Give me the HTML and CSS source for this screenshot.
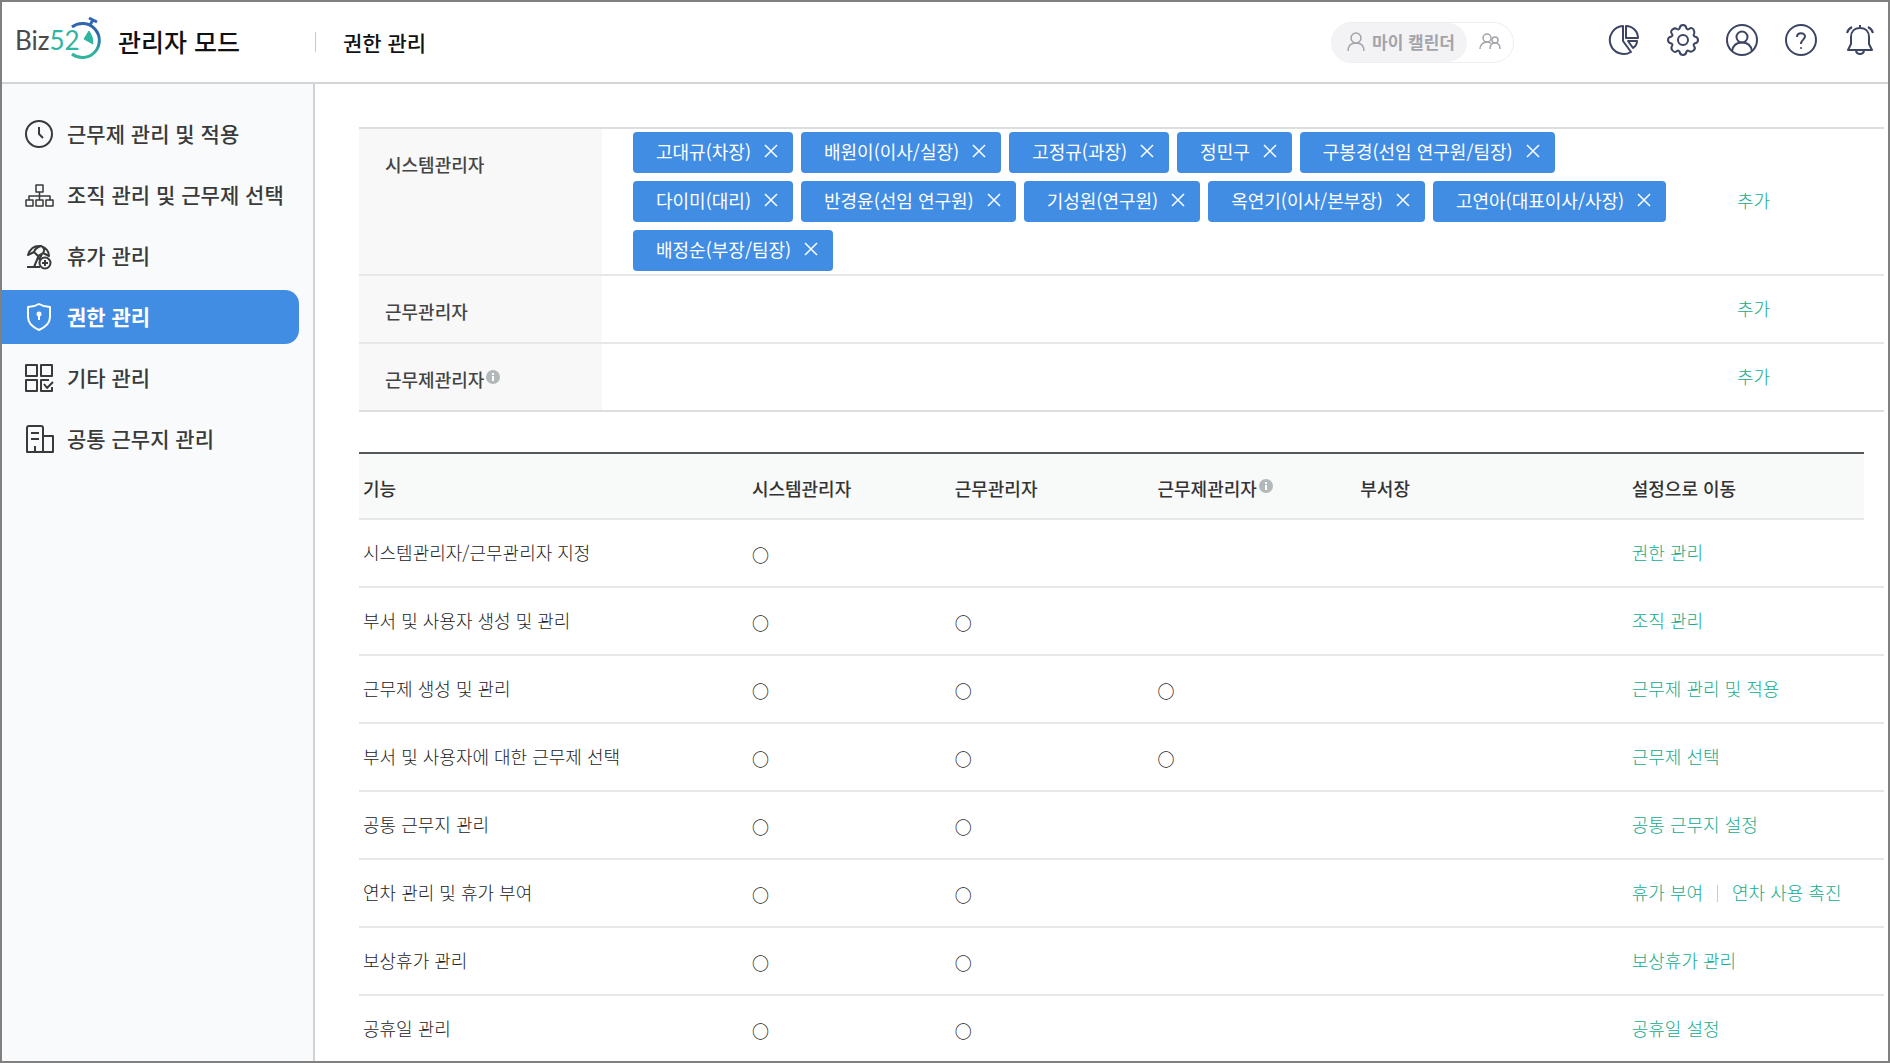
FILE: index.html
```html
<!DOCTYPE html>
<html lang="ko">
<head>
    <meta charset="UTF-8">
    <meta name="viewport" content="width=device-width, initial-scale=1.0">
    <title>권한 관리 - 관리자 모드</title>
    <link rel="stylesheet" href="styles.css">
</head>
<body>
    <div class="app">
        <header class="header">
            <div class="brand">
                <a href="#" class="logo" aria-label="Biz52">
                    <svg width="88" height="46" viewBox="0 0 88 46">
                        <defs>
                            <linearGradient id="ring" x1="0" y1="0" x2="0" y2="1">
                                <stop offset="0.3" stop-color="#2f66ad"/>
                                <stop offset="0.9" stop-color="#2fb5a0"/>
                            </linearGradient>
                        </defs>
                        <text x="-1" y="34" class="logo-text">Biz<tspan class="logo-num">52</tspan></text>
                        <path d="M56 11A17 17 0 1 1 56 38" fill="none" stroke="url(#ring)" stroke-width="3"/>
                        <path d="M73 2l8 4M77 4l-3 5" fill="none" stroke="#2f66ad" stroke-width="3"/>
                        <path d="M73 15q4 5 4 13l-9-5z" fill="#2fb5a0" stroke="#2fb5a0" stroke-width="1" stroke-linejoin="round"/>
                    </svg>
                </a>
                <strong class="mode">관리자 모드</strong>
            </div>
            <h1 class="page-title">권한 관리</h1>

            <div class="calendar-switch">
                <button type="button" class="switch-btn on">
                    <svg width="18" height="20" viewBox="0 0 18 20"><circle cx="9" cy="6" r="5"/><path d="M1 19c0-5 3-8 8-8s8 3 8 8"/></svg>
                    마이 캘린더
                </button>
                <button type="button" class="switch-btn" aria-label="공유 캘린더">
                    <svg width="22" height="18" viewBox="0 0 22 18"><circle cx="8" cy="5" r="4"/><path d="M1 16c0-4 3-7 7-7 2 0 3 .5 4 1.500"/><circle cx="16" cy="7" r="3"/><path d="M11 16c0-4 2-6 5-6s5 2 5 6"/></svg>
                </button>
            </div>

            <nav class="tools" aria-label="도구">
                <button type="button" aria-label="통계">
                    <svg width="32" height="32" viewBox="0 0 32 32"><path d="M15 2A14 14 0 1 0 23 28L15 17z"/><path d="M18 2a12 12 0 0 1 12 12H18z"/><path d="M20 17h9c0 3-1 5-4 7z"/></svg>
                </button>
                <button type="button" aria-label="설정">
                    <svg width="32" height="32" viewBox="0 0 32 32"><path d="M12.500 4.500Q13 1 16 1T19.500 4.500Q20.500 6 22 5Q25 3 26.500 5.500T27 10Q26 11.500 27.500 12.500Q31 13 31 16T27.500 19.500Q26 20.500 27 22Q29 24.500 26.500 26.500T22 27Q20.500 26 19.500 27.500Q19 31 16 31T12.500 27.500Q11.500 26 10 27Q7.500 29 5.500 26.500T5 22Q6 20.500 4.500 19.500Q1 19 1 16T4.500 12.500Q6 11.500 5 10Q3 7.500 5.500 5.500T10 5Q11.500 6 12.500 4.500z"/><circle cx="16" cy="16" r="5"/></svg>
                </button>
                <button type="button" aria-label="내 정보">
                    <svg width="32" height="32" viewBox="0 0 32 32"><circle cx="16" cy="16" r="15"/><circle cx="16" cy="13" r="5.500"/><path d="M6 27c1-5.500 5-8.500 10-8.500s9 3 10 8.500"/></svg>
                </button>
                <button type="button" aria-label="도움말">
                    <svg width="32" height="32" viewBox="0 0 32 32"><circle cx="16" cy="16" r="15"/><path d="M12 13c0-5 8-5 8-.5 0 3-4 3.500-4 7.500"/><circle cx="16" cy="24" r="1" class="dot"/></svg>
                </button>
                <button type="button" aria-label="알림">
                    <svg width="32" height="32" viewBox="0 0 32 32"><path d="M16 1v3M16 4c-6 0-9 4-9 9v7l-3 6h24l-3-6v-7c0-5-3-9-9-9zM12 27c1 4 7 4 8 0M3 9q1-4 5-6M29 9q-1-4-5-6"/></svg>
                </button>
            </nav>
        </header>

        <div class="body">
            <nav class="sidebar" aria-label="관리 메뉴">
                <a href="#" class="menu-item">
                    <svg width="30" height="30" viewBox="0 0 30 30"><circle cx="15" cy="15" r="13"/><path d="M15 8v7l4 4"/></svg>
                    <span>근무제 관리 및 적용</span>
                </a>
                <a href="#" class="menu-item">
                    <svg width="30" height="30" viewBox="0 0 30 30" class="thin"><path d="M12 5h7v7h-7zM2 20h7v6H2zM12 20h7v6h-7zM22 20h7v6h-7zM15.500 12v8M5 20v-4h21v4"/></svg>
                    <span>조직 관리 및 근무제 선택</span>
                </a>
                <a href="#" class="menu-item">
                    <svg width="30" height="30" viewBox="0 0 30 30"><path d="M4 14Q7 4 17 5Q25 8 25 15L19 12L14 15L10 11zM17 5Q11 7 10 11M17 5Q22 8 19 12M15 14l-5 12M18 13l-3 6M3 26h13"/><circle cx="21" cy="22" r="5.500"/><path d="M21 19v6M18 22h6"/></svg>
                    <span>휴가 관리</span>
                </a>
                <a href="#" class="menu-item active" aria-current="page">
                    <svg width="30" height="30" viewBox="0 0 30 30"><path d="M15 2q5 3 11 3v10q0 8-11 13Q4 23 4 15V5q6 0 11-3z"/><path d="M15 12v6"/><circle cx="15" cy="12" r="1.500"/></svg>
                    <span>권한 관리</span>
                </a>
                <a href="#" class="menu-item">
                    <svg width="30" height="30" viewBox="0 0 30 30"><path d="M2 2h11v11H2zM17 2h11v11H17zM2 17h11v11H2zM25 17h-8v11h11v-4M20 21l3 4 6-6"/></svg>
                    <span>기타 관리</span>
                </a>
                <a href="#" class="menu-item">
                    <svg width="30" height="30" viewBox="0 0 30 30"><path d="M3 28V4q0-2 2-2h12q2 0 2 2v24zM19 12h10v16H19M7 9h8M7 15h8M11 28v-6"/></svg>
                    <span>공통 근무지 관리</span>
                </a>
            </nav>

            <main class="content">
                <table class="managers">
                    <tbody>
                        <tr>
                            <th scope="row">시스템관리자</th>
                            <td>
                                <ul class="chips">
                                    <li class="chip">고대규(차장)<button type="button" aria-label="고대규 삭제"><svg width="14" height="14" viewBox="0 0 14 14"><path d="M1 1l12 12M13 1L1 13"/></svg></button></li>
                                    <li class="chip">배원이(이사/실장)<button type="button" aria-label="배원이 삭제"><svg width="14" height="14" viewBox="0 0 14 14"><path d="M1 1l12 12M13 1L1 13"/></svg></button></li>
                                    <li class="chip">고정규(과장)<button type="button" aria-label="고정규 삭제"><svg width="14" height="14" viewBox="0 0 14 14"><path d="M1 1l12 12M13 1L1 13"/></svg></button></li>
                                    <li class="chip">정민구<button type="button" aria-label="정민구 삭제"><svg width="14" height="14" viewBox="0 0 14 14"><path d="M1 1l12 12M13 1L1 13"/></svg></button></li>
                                    <li class="chip">구봉경(선임 연구원/팀장)<button type="button" aria-label="구봉경 삭제"><svg width="14" height="14" viewBox="0 0 14 14"><path d="M1 1l12 12M13 1L1 13"/></svg></button></li>
                                    <li class="chip">다이미(대리)<button type="button" aria-label="다이미 삭제"><svg width="14" height="14" viewBox="0 0 14 14"><path d="M1 1l12 12M13 1L1 13"/></svg></button></li>
                                    <li class="chip">반경윤(선임 연구원)<button type="button" aria-label="반경윤 삭제"><svg width="14" height="14" viewBox="0 0 14 14"><path d="M1 1l12 12M13 1L1 13"/></svg></button></li>
                                    <li class="chip">기성원(연구원)<button type="button" aria-label="기성원 삭제"><svg width="14" height="14" viewBox="0 0 14 14"><path d="M1 1l12 12M13 1L1 13"/></svg></button></li>
                                    <li class="chip">옥연기(이사/본부장)<button type="button" aria-label="옥연기 삭제"><svg width="14" height="14" viewBox="0 0 14 14"><path d="M1 1l12 12M13 1L1 13"/></svg></button></li>
                                    <li class="chip">고연아(대표이사/사장)<button type="button" aria-label="고연아 삭제"><svg width="14" height="14" viewBox="0 0 14 14"><path d="M1 1l12 12M13 1L1 13"/></svg></button></li>
                                    <li class="chip">배정순(부장/팀장)<button type="button" aria-label="배정순 삭제"><svg width="14" height="14" viewBox="0 0 14 14"><path d="M1 1l12 12M13 1L1 13"/></svg></button></li>
                                </ul>
                            </td>
                            <td class="add"><button type="button">추가</button></td>
                        </tr>
                        <tr>
                            <th scope="row">근무관리자</th>
                            <td></td>
                            <td class="add"><button type="button">추가</button></td>
                        </tr>
                        <tr>
                            <th scope="row">근무제관리자<svg class="info" width="14" height="14" viewBox="0 0 14 14"><circle cx="7" cy="7" r="7"/><path d="M7 3v2M7 6v5"/></svg></th>
                            <td></td>
                            <td class="add"><button type="button">추가</button></td>
                        </tr>
                    </tbody>
                </table>

                <table class="features">
                    <colgroup>
                        <col class="col-name">
                        <col class="col-role">
                        <col class="col-role">
                        <col class="col-role">
                        <col class="col-head">
                        <col>
                        <col class="col-end">
                    </colgroup>
                    <thead>
                        <tr>
                            <th scope="col">기능</th>
                            <th scope="col">시스템관리자</th>
                            <th scope="col">근무관리자</th>
                            <th scope="col">근무제관리자<svg class="info" width="14" height="14" viewBox="0 0 14 14"><circle cx="7" cy="7" r="7"/><path d="M7 3v2M7 6v5"/></svg></th>
                            <th scope="col">부서장</th>
                            <th scope="col">설정으로 이동</th>
                        </tr>
                    </thead>
                    <tbody>
                        <tr>
                            <td>시스템관리자/근무관리자 지정</td>
                            <td class="mark">○</td>
                            <td></td>
                            <td></td>
                            <td></td>
                            <td colspan="2"><a href="#">권한 관리</a></td>
                        </tr>
                        <tr>
                            <td>부서 및 사용자 생성 및 관리</td>
                            <td class="mark">○</td>
                            <td class="mark">○</td>
                            <td></td>
                            <td></td>
                            <td colspan="2"><a href="#">조직 관리</a></td>
                        </tr>
                        <tr>
                            <td>근무제 생성 및 관리</td>
                            <td class="mark">○</td>
                            <td class="mark">○</td>
                            <td class="mark">○</td>
                            <td></td>
                            <td colspan="2"><a href="#">근무제 관리 및 적용</a></td>
                        </tr>
                        <tr>
                            <td>부서 및 사용자에 대한 근무제 선택</td>
                            <td class="mark">○</td>
                            <td class="mark">○</td>
                            <td class="mark">○</td>
                            <td></td>
                            <td colspan="2"><a href="#">근무제 선택</a></td>
                        </tr>
                        <tr>
                            <td>공통 근무지 관리</td>
                            <td class="mark">○</td>
                            <td class="mark">○</td>
                            <td></td>
                            <td></td>
                            <td colspan="2"><a href="#">공통 근무지 설정</a></td>
                        </tr>
                        <tr>
                            <td>연차 관리 및 휴가 부여</td>
                            <td class="mark">○</td>
                            <td class="mark">○</td>
                            <td></td>
                            <td></td>
                            <td colspan="2"><a href="#">휴가 부여</a><span class="bar"></span><a href="#">연차 사용 촉진</a></td>
                        </tr>
                        <tr>
                            <td>보상휴가 관리</td>
                            <td class="mark">○</td>
                            <td class="mark">○</td>
                            <td></td>
                            <td></td>
                            <td colspan="2"><a href="#">보상휴가 관리</a></td>
                        </tr>
                        <tr>
                            <td>공휴일 관리</td>
                            <td class="mark">○</td>
                            <td class="mark">○</td>
                            <td></td>
                            <td></td>
                            <td colspan="2"><a href="#">공휴일 설정</a></td>
                        </tr>
                    </tbody>
                </table>
            </main>
        </div>
    </div>
</body>
</html>
```

FILE: styles.css
```css
* {
    box-sizing: border-box;
}

body {
    margin: 0;
    font-family: "Noto Sans CJK KR", sans-serif;
    font-size: 18px;
    line-height: 26px;
    color: #444;
    background-color: #fff;
}

button {
    padding: 0;
    border: none;
    background: none;
    font: inherit;
    color: inherit;
    cursor: pointer;
}

a {
    color: #14ab8a;
    text-decoration: none;
}

svg {
    display: block;
    flex: none;
    fill: none;
    stroke: currentColor;
}

.app {
    display: flex;
    flex-direction: column;
    height: 100vh;
    border: 2px solid #808080;
}

/* header */
.header {
    display: flex;
    align-items: center;
    flex: none;
    height: 82px;
    padding-right: 12px;
    border-bottom: 2px solid #d3d4d6;
}

.brand {
    display: flex;
    align-items: center;
    gap: 14px;
    width: 313px;
    padding-left: 14px;
}

.logo svg {
    stroke: none;
    margin-bottom: 6px;
}

.logo-text {
    font-family: Lato, sans-serif;
    font-size: 26px;
    fill: #4a4a4c;
}

.logo-num {
    fill: #2fb5a0;
}

.mode {
    padding-bottom: 2px;
    font-size: 25px;
    font-weight: 500;
    color: #111;
}

.page-title {
    margin: 0;
    padding-left: 27px;
    border-left: 1px solid #c8c8c8;
    font-size: 21px;
    font-weight: 500;
    line-height: 20px;
    color: #111;
}

.calendar-switch {
    display: flex;
    margin-left: auto;
    margin-right: 94px;
    border: 1px solid #eeeef0;
    border-radius: 21px;
    color: #a3a4a9;
}

.switch-btn {
    display: flex;
    align-items: center;
    gap: 7px;
    height: 39px;
    padding: 0 12px;
    border-radius: 20px;
    font-size: 17px;
    font-weight: 700;
}

.switch-btn svg {
    stroke-width: 1.5;
}

.switch-btn.on {
    padding-left: 15px;
    background-color: #f3f3f5;
}

.tools {
    display: flex;
    gap: 27px;
    padding-bottom: 4px;
    color: #3c4562;
}

.tools svg {
    stroke-width: 2;
    stroke-linejoin: round;
}

.tools .dot {
    fill: currentColor;
    stroke: none;
}

/* layout */
.body {
    display: flex;
    flex: 1;
    min-height: 0;
}

.sidebar {
    display: flex;
    flex-direction: column;
    flex: none;
    gap: 7px;
    width: 313px;
    padding: 23px 14px 0 0;
    border-right: 2px solid #d0d2d6;
    background-color: #f8fafc;
}

.menu-item {
    display: flex;
    align-items: center;
    gap: 13px;
    height: 54px;
    padding-left: 22px;
    border-radius: 0 14px 14px 0;
    font-size: 21px;
    font-weight: 500;
    color: #3a3a3a;
}

.menu-item svg {
    stroke-width: 2;
    stroke-linejoin: round;
}

.menu-item .thin {
    stroke-width: 1.5;
}

.menu-item span {
    padding-bottom: 3px;
}

.menu-item.active {
    background-color: #428de4;
    font-weight: 700;
    color: #fff;
}

.content {
    flex: 1;
    min-width: 0;
    padding: 43px 4px 0 44px;
    overflow-y: auto;
    scrollbar-width: none;
}

table {
    width: 100%;
    border-spacing: 0;
}

th {
    font-weight: 500;
    text-align: left;
}

.info {
    display: inline-block;
    margin-left: 2px;
    vertical-align: 3px;
    fill: #b3b8ba;
    stroke: none;
}

.info path {
    stroke: #fff;
    stroke-width: 2;
}

/* manager assignment */
.managers {
    margin-bottom: 40px;
    border-top: 2px solid #dcdedf;
}

.managers th,
.managers td {
    height: 68px;
    padding: 0;
    border-bottom: 2px solid #e6e7e7;
}

.managers tr:last-child > * {
    border-bottom-color: #dcdedf;
}

.managers th {
    width: 243px;
    padding: 22px 0 0 26px;
    background-color: #f8f8f8;
    vertical-align: top;
}

.managers .add {
    width: 147px;
    padding-bottom: 3px;
    font-weight: 300;
    color: #14ab8a;
}

.chips {
    display: flex;
    flex-wrap: wrap;
    gap: 8px;
    margin: 0;
    padding: 3px 20px 3px 31px;
    list-style: none;
}

.chip {
    display: flex;
    align-items: center;
    gap: 13px;
    height: 41px;
    padding: 0 15px 3px 23px;
    border-radius: 4px;
    background-color: #428de4;
    color: #fff;
}

.chip svg {
    stroke-width: 1.5;
}

/* feature permissions */
.features {
    table-layout: fixed;
}

.col-name {
    width: 25.5%;
}

.col-role {
    width: 13.3%;
}

.col-head {
    width: 17.8%;
}

.col-end {
    width: 20px;
}

.features th,
.features td {
    height: 68px;
    padding: 0 0 2px 4px;
    border-bottom: 2px solid #e6e7e7;
}

.features td {
    font-weight: 300;
    color: #222;
}

.features th {
    padding: 4px 0 0 4px;
    border-top: 2px solid #55585c;
    background-color: #f8f9f9;
    color: #333;
}

.features .mark {
    padding: 3px 0 0 4px;
    font-size: 17px;
    font-weight: 500;
}

.bar {
    display: inline-block;
    width: 1px;
    height: 17px;
    margin: 0 14px;
    background-color: #ccc;
    vertical-align: -2px;
}
```
